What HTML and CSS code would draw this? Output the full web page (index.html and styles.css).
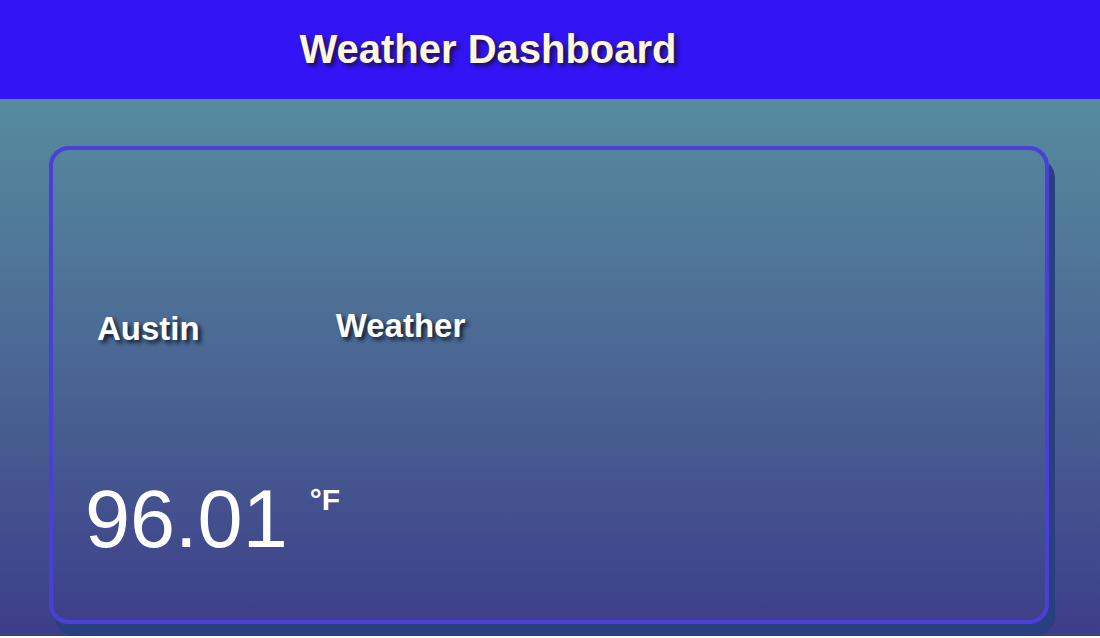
FILE: index.html
```html
<!DOCTYPE html>
<html lang="en">
<head>
<meta charset="utf-8">
<title>Weather Dashboard</title>
<link rel="stylesheet" href="styles.css">
</head>
<body>
<header class="site-header">
  <h1 class="site-title">Weather Dashboard</h1>
</header>
<main class="main">
  <section class="card">
    <div class="card-row">
      <h2 class="city">Austin</h2>
      <h2 class="label">Weather</h2>
    </div>
    <div class="temp-row">
      <span class="temp">96.01</span>
      <span class="unit">°F</span>
    </div>
  </section>
</main>
</body>
</html>
```

FILE: styles.css
```css
* { box-sizing: border-box; }
html, body { margin: 0; padding: 0; }
body {
  font-family: "Liberation Sans", Arial, sans-serif;
  background: #ffffff;
  overflow: hidden;
}
.site-header {
  height: 99px;
  background: #3314f5;
  display: flex;
  justify-content: center;
  padding-right: 124px;
}
.site-title {
  margin: 29px 0 0;
  font-size: 40px;
  line-height: 1;
  font-weight: bold;
  color: #fff8dc;
  text-shadow: 3px 3px 4px #1a1050;
}
.main {
  height: 537px;
  background: linear-gradient(to bottom, #578b9f 0%, #4a6693 50%, #3d3d89 100%);
  padding-top: 47px;
  padding-left: 49px;
}
.card {
  width: 1000px;
  height: 478px;
  border: 4px solid #4a3fd6;
  border-radius: 20px;
  box-shadow: 6px 12px 0 #283f80;
}
.card-row {
  display: flex;
  align-items: flex-start;
  padding-left: 44px;
  margin-top: 159px;
}
.city, .label {
  margin: 0;
  font-size: 33px;
  line-height: 1;
  font-weight: bold;
  color: #ffffff;
  text-shadow: 3px 3px 4px #101a30;
}
.city { margin-top: 3px; }
.label { margin-left: 136px; }
.temp-row {
  display: flex;
  align-items: flex-start;
  padding-left: 32px;
  margin-top: 134px;
}
.temp {
  font-size: 81px;
  line-height: 1;
  color: #ffffff;
}
.unit {
  margin-left: 22px;
  margin-top: 6px;
  font-size: 30px;
  line-height: 1;
  font-weight: bold;
  color: #ffffff;
}
```
